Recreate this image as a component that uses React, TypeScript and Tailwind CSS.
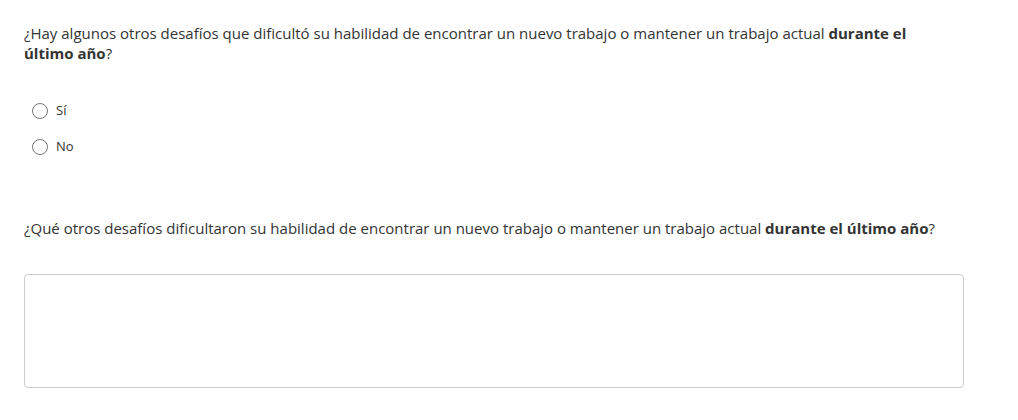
const Radio = ({ label }: { label: string }) => (
  <label className="flex items-center h-5 gap-[8px] cursor-pointer">
    <span className="w-[16px] h-[16px] rounded-full border border-[#767676] bg-white" />
    <span className="text-[13px] text-[#333]">{label}</span>
  </label>
);

export default function App() {
  return (
    <div
      className="min-h-screen bg-white text-[#333] pl-[24px] pt-[23px]"
      style={{ fontFamily: '"Open Sans", "Noto Sans", sans-serif' }}
    >
      <div className="w-[940px]">
        <p className="max-w-[920px] text-[15px] leading-[20px]">
          ¿Hay algunos otros desafíos que dificultó su habilidad de encontrar un nuevo trabajo o
          mantener un trabajo actual <b>durante el último año</b>?
        </p>

        <div className="mt-[38px] pl-[8px] flex flex-col gap-[16px]">
          <Radio label="Sí" />
          <Radio label="No" />
        </div>

        <p className="mt-[61px] text-[15px] leading-[20px]">
          ¿Qué otros desafíos dificultaron su habilidad de encontrar un nuevo trabajo o mantener
          un trabajo actual <b>durante el último año</b>?
        </p>

        <textarea className="mt-[36px] block w-[940px] h-[114px] border border-[#ccc] rounded-[4px] resize-none outline-none" />
      </div>
    </div>
  );
}
